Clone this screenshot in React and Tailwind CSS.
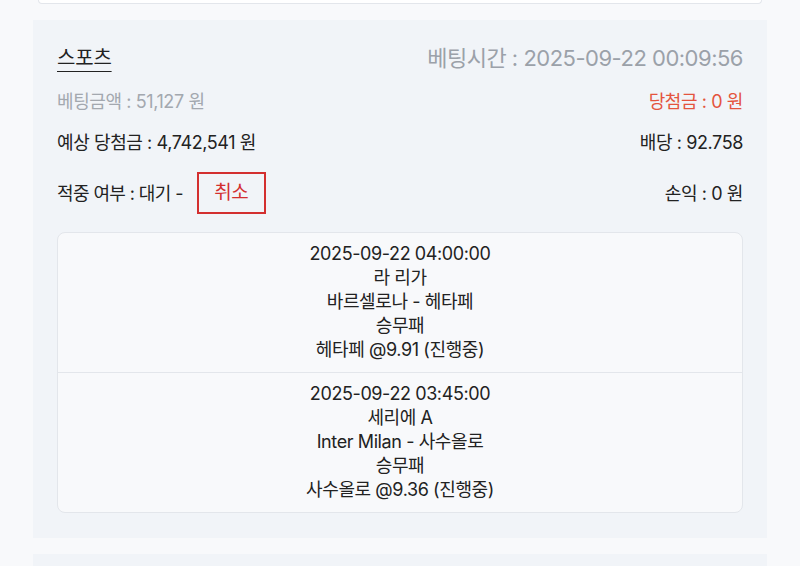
export default function App() {
  const items = [
    ["2025-09-22 04:00:00", "라 리가", "바르셀로나 - 헤타페", "승무패", "헤타페 @9.91 (진행중)"],
    ["2025-09-22 03:45:00", "세리에 A", "Inter Milan - 사수올로", "승무패", "사수올로 @9.36 (진행중)"],
  ];
  return (
    <div
      className="min-h-[566px] bg-[#f8f9fb] text-[#222]"
      style={{ fontFamily: 'Inter, "Noto Sans CJK KR", sans-serif' }}
    >
      <div className="mx-[38px] h-[4px] rounded-b-[12px] border border-t-0 border-[#e3e6eb] bg-white" />
      <div className="mx-[33px] mt-[16px] bg-[#f1f4f8] px-[24px] pt-[22px] pb-[25px]">
        <div className="flex h-[32px] items-center justify-between">
          <span className="text-[20px] underline underline-offset-[6px] decoration-1 tracking-[-0.2px]">스포츠</span>
          <span className="text-[22px] text-[#9ba1a9] tracking-[-0.5px]">베팅시간 : 2025-09-22 00:09:56</span>
        </div>
        <div className="mt-[11px] flex h-[32px] items-center justify-between text-[18px] tracking-[-0.4px]">
          <span className="text-[#a3a8af]">베팅금액 : 51,127 원</span>
          <span className="text-[#e4543e]">당첨금 : 0 원</span>
        </div>
        <div className="mt-[9px] flex h-[32px] items-center justify-between text-[18px] tracking-[-0.4px]">
          <span>예상 당첨금 : 4,742,541 원</span>
          <span>배당 : 92.758</span>
        </div>
        <div className="mt-[14px] flex h-[42px] items-center justify-between text-[18px] tracking-[-0.4px]">
          <div className="flex items-center">
            <span className="tracking-[-0.6px]">적중 여부 : 대기 -</span>
            <span className="ml-[14px] flex h-[42px] w-[69px] items-center justify-center border-2 border-[#d32f2f] text-[19px] text-[#d32f2f]">취소</span>
          </div>
          <span>손익 : 0 원</span>
        </div>
        <div className="mt-[18px] overflow-hidden rounded-[8px] border border-[#e3e6eb] bg-[#f8f9fb]">
          {items.map((lines, i) => (
            <div
              key={i}
              className={`flex flex-col items-center pt-[9px] pb-[10px] text-[18px] leading-[24px] tracking-[-0.4px] ${i > 0 ? "border-t border-[#e3e6eb]" : ""}`}
            >
              {lines.map((l, j) => (
                <div key={j}>{l}</div>
              ))}
            </div>
          ))}
        </div>
      </div>
      <div className="mx-[33px] mt-[16px] h-[20px] bg-[#f1f4f8]" />
    </div>
  );
}
